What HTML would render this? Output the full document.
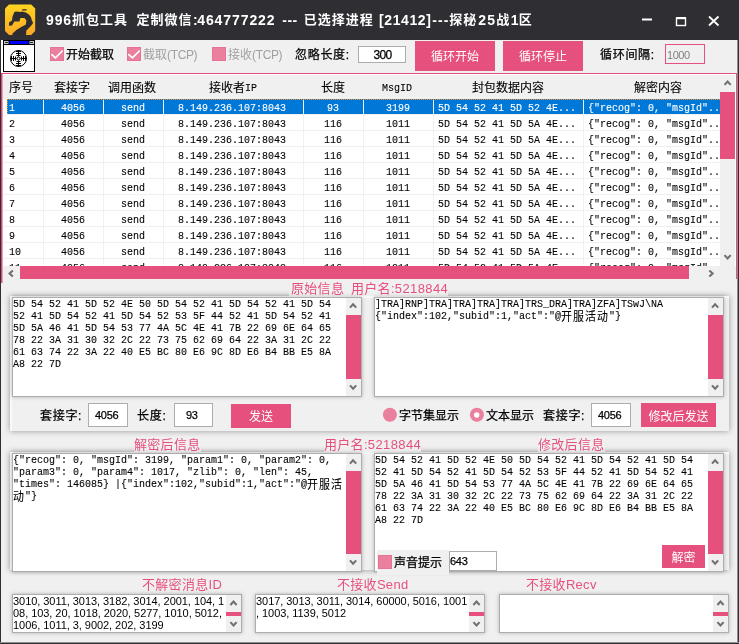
<!DOCTYPE html><html><head><meta charset="utf-8"><title>996抓包工具</title><style>
html,body{margin:0;padding:0;}
body{width:739px;height:644px;position:relative;overflow:hidden;will-change:transform;background:#f0f0f0;font-family:"Liberation Sans","Noto Sans CJK SC",sans-serif;font-size:12px;color:#000;}
.a{position:absolute;white-space:pre;}
.ui{font-family:"Liberation Sans","Noto Sans CJK SC",sans-serif;font-size:12px;line-height:16px;}
.m{font-family:"Liberation Mono","Noto Sans CJK SC",monospace;font-size:11px;line-height:12px;transform:scaleX(0.9091);transform-origin:0 0;-webkit-text-stroke:0.1px;}
.pk{color:#e6507d;font-size:13px;line-height:16px;background:#f0f0f0;letter-spacing:0.3px;margin-left:-1px;}
.ui{margin-top:1px;-webkit-text-stroke:0.25px;}
.btn{background:#e6507d;color:#fff;text-align:center;margin-top:0;-webkit-text-stroke:0;padding-top:1px;box-sizing:border-box;}
.lb{letter-spacing:0.7px;}
.gr{color:#a0a0a0;-webkit-text-stroke:0;}
.tcp{letter-spacing:-0.35px;}
.n{font-size:11px;letter-spacing:-0.25px;}
.ta{background:#fff;border:1px solid #adadad;box-sizing:border-box;box-shadow:0 0 4px rgba(0,0,0,0.25);}
.grp{background:#f0f0f0;box-sizing:border-box;border-left:2px solid #f9f9f9;border-top:2px solid #f9f9f9;box-shadow:0 0 6px rgba(0,0,0,0.38);}
.cj{font-size:12px;letter-spacing:1.2px;line-height:12px;display:inline-block;height:12px;vertical-align:top;position:relative;top:1.5px;}
.dg{letter-spacing:0.4px;}
.inp{background:#fff;border:1px solid #adadad;box-sizing:border-box;}
.sb{background:#f0f0f0;}
.th{background:#e6507d;}
.row{position:absolute;left:3px;width:717px;height:15px;border-bottom:1px solid #f0f0f0;}
.row .m{top:3px;}
.vl{position:absolute;width:1px;background:#f0f0f0;top:99px;height:166px;}
.sel{background:#0078d7;color:#fff;}
.hd{top:79px;-webkit-text-stroke:0.1px;}
.m12{font-size:12px;transform:scaleX(0.8333);}
.tc{font-size:13px;letter-spacing:1px;vertical-align:top;}
.tl{font-size:14px;vertical-align:top;}
</style></head><body>
<div class="a" style="left:0;top:0;width:739px;height:40px;background:#2f2e33"></div>
<svg class="a" style="left:0;top:0" width="40" height="40" viewBox="0 0 40 40">
<defs><linearGradient id="g" x1="0" y1="0" x2="0" y2="1"><stop offset="0" stop-color="#ffd420"/><stop offset="1" stop-color="#f8a926"/></linearGradient></defs>
<path d="M9 4.6 L31.2 4.6 L35.2 8.6 L35.2 31 L31.2 35 L9 35 L5 31 L5 8.6 Z" fill="url(#g)"/>
<path d="M9 25.8 L9 22.4 L12 20.4 L12.5 16.4 L14.4 12 L16 11.5 L20.4 12 L21.9 11.5 L25.9 12.5 L28.9 14.4 L30.9 17 L31.9 20.4 L33.1 22.9 L30.9 25.9 L28.9 27.9 L26.4 30.4 L25.9 35.8 L12.5 35.8 L12.5 33.4 L16.4 29.9 L20.4 27.4 L25.9 24.4 L26.4 20.4 L24.4 17.9 L20.4 17.9 L19.4 21.4 L14.4 21.4 L12 25.4 Z" fill="#2d2d32"/>
<rect x="22.2" y="9.2" width="4.4" height="1.3" fill="#2d2d32"/>
</svg>
<div class="a" id="ttl" style="left:46px;top:9px;height:22px;line-height:22px;color:#fff;font-weight:bold;white-space:pre"><span class="tl" style="display:inline-block;width:26px;letter-spacing:0.9px;">996</span><span class="tc" style="display:inline-block;width:64.4px;">抓包工具</span><span class="tc" style="display:inline-block;width:56.6px;">定制微信</span><span class="tl" style="display:inline-block;width:4.2px;">:</span><span class="tl" style="display:inline-block;width:85.1px;letter-spacing:0.92px;">464777222</span><span class="tl" style="display:inline-block;width:21.6px;letter-spacing:0.5px;">---</span><span class="tc" style="display:inline-block;width:75.2px;">已选择进程</span><span class="tl" style="display:inline-block;width:53.3px;letter-spacing:0.6px;">[21412]</span><span class="tl" style="display:inline-block;width:17px;letter-spacing:1px;">---</span><span class="tc" style="display:inline-block;width:29px;">探秘</span><span class="tl" style="display:inline-block;width:18px;letter-spacing:1.2px;">25</span><span class="tc" style="display:inline-block;width:14.5px;">战</span><span class="tl" style="display:inline-block;width:8px;">1</span><span class="tc" style="display:inline-block;width:15px;">区</span></div>
<svg class="a" style="left:630px;top:8px" width="100" height="26" viewBox="630 8 100 26">
<g stroke="#fff" fill="none">
<line x1="642" y1="19.5" x2="652" y2="19.5" stroke-width="2"/>
<rect x="676.5" y="18.5" width="9" height="7" stroke-width="1.4"/><line x1="676" y1="18" x2="686" y2="18" stroke-width="2"/>
<path d="M709 16.5 L718.5 25.5 M718.5 16.5 L709 25.5" stroke-width="1.8"/>
</g></svg>
<svg class="a" style="left:1px;top:40px" width="35" height="33" viewBox="-2 0 35 33">
<rect x="-2" y="0" width="2" height="33" fill="#fff"/>
<rect x="0.5" y="0.5" width="31" height="31" fill="#fff" stroke="#000"/>
<rect x="1" y="1" width="30" height="3" fill="#0000ff"/>
<rect x="1" y="4" width="30" height="1" fill="#000"/>
<rect x="1" y="1" width="5" height="3" fill="#c8c8c8"/><rect x="2" y="2" width="3" height="1" fill="#222"/><rect x="5.5" y="1" width="1" height="3" fill="#000"/>
<rect x="26" y="1" width="5" height="3" fill="#c8c8c8"/><rect x="27" y="2" width="3" height="1" fill="#222"/><rect x="25.5" y="1" width="1" height="3" fill="#000"/>
<g stroke="#000" fill="none" stroke-width="1">
<circle cx="15.5" cy="18.5" r="8"/>
<circle cx="15.5" cy="18.5" r="1.5" fill="#fff"/>
<path d="M15.5 10 V16.5 M15.5 20.5 V27 M7 18.5 H13.5 M17.5 18.5 H24"/>
<path d="M13 11.5 H18 M13 13.5 H18 M13.5 15.5 H17.5 M13 25.5 H18 M13 23.5 H18 M13.5 21.5 H17.5"/>
<path d="M8.5 16 V21 M10.5 16 V21 M12.5 16.5 V20.5 M22.5 16 V21 M20.5 16 V21 M18.5 16.5 V20.5"/>
</g></svg>
<svg class="a" style="left:50px;top:47px" width="14" height="14" viewBox="0 0 14 14"><rect width="14" height="14" fill="#e77394"/><rect x="1" y="1" width="12" height="12" fill="#ea7f9e"/><polyline points="1.8,7.6 5.4,10.9 12.3,4" fill="none" stroke="#fff" stroke-width="1.7" stroke-linecap="round" stroke-linejoin="round"/></svg>
<div class="a ui" style="left:66px;top:46px">开始截取</div>
<svg class="a" style="left:127px;top:47px" width="14" height="14" viewBox="0 0 14 14"><rect width="14" height="14" fill="#e77394"/><rect x="1" y="1" width="12" height="12" fill="#ea7f9e"/><polyline points="1.8,7.6 5.4,10.9 12.3,4" fill="none" stroke="#fff" stroke-width="1.7" stroke-linecap="round" stroke-linejoin="round"/></svg>
<div class="a ui gr" style="left:143px;top:46px">截取<span class="tcp">(TCP)</span></div>
<svg class="a" style="left:212px;top:47px" width="14" height="14" viewBox="0 0 14 14"><rect width="14" height="14" fill="#e77394"/><rect x="1" y="1" width="12" height="12" fill="#ea7f9e"/></svg>
<div class="a ui gr" style="left:228px;top:46px">接收<span class="tcp">(TCP)</span></div>
<div class="a ui lb" style="left:295px;top:46px">忽略长度:</div>
<div class="a inp" style="left:358px;top:46px;width:48px;height:17px"></div><div class="a ui" style="left:373.5px;top:46px;letter-spacing:-0.7px">300</div>
<div class="a btn ui" style="left:415px;top:41px;width:80px;height:30px;line-height:30px">循环开始</div>
<div class="a btn ui" style="left:503px;top:41px;width:80px;height:30px;line-height:30px">循环停止</div>
<div class="a ui lb" style="left:600px;top:46px">循环间隔:</div>
<div class="a" style="left:665px;top:44px;width:40px;height:20px;box-sizing:border-box;border:1px solid #e6507d;background:#f0f0f0"></div><div class="a ui" style="left:667px;top:46px;color:#808080;font-size:11px;letter-spacing:-0.45px;-webkit-text-stroke:0">1000</div>
<div class="a" style="left:1px;top:73px;width:736px;height:1px;background:#e6507d"></div>
<div class="a" style="left:1px;top:73px;width:1px;height:210px;background:#d04b74"></div>
<div class="a" style="left:2px;top:74px;width:1px;height:209px;background:#efa0b8"></div>
<div class="a" style="left:736px;top:73px;width:1px;height:206px;background:#e6507d"></div>
<div class="a" style="left:3px;top:74px;width:733px;height:1px;background:#fff"></div>
<div class="a" style="left:735px;top:74px;width:1px;height:205px;background:#fff"></div>
<div class="a" style="left:3px;top:99px;width:717px;height:167px;background:#fff"></div>
<div class="a ui hd" style="left:9px">序号</div>
<div class="a ui hd" style="left:54px">套接字</div>
<div class="a ui hd" style="left:108px">调用函数</div>
<div class="a ui hd" style="left:209px">接收者</div>
<div class="a ui hd" style="left:321px">长度</div>
<div class="a ui hd" style="left:472px">封包数据内容</div>
<div class="a ui hd" style="left:634px">解密内容</div>
<div class="a m" style="left:245px;top:82px">IP</div>
<div class="a m" style="left:382px;top:82px">MsgID</div>
<div class="row sel" style="top:99px;left:7px;width:713px;"><span class="a m" style="left:2px">1</span><span class="a m" style="left:54px">4056</span><span class="a m" style="left:114px">send</span><span class="a m" style="left:171px">8.149.236.107:8043</span><span class="a m" style="left:320px">93</span><span class="a m" style="left:379px">3199</span><span class="a m" style="left:431px">5D 54 52 41 5D 52 4E...</span><span class="a m" style="left:581px">{&quot;recog&quot;: 0, &quot;msgId&quot;..</span></div>
<div class="row" style="top:115px;"><span class="a m" style="left:6px">2</span><span class="a m" style="left:58px">4056</span><span class="a m" style="left:118px">send</span><span class="a m" style="left:175px">8.149.236.107:8043</span><span class="a m" style="left:321px">116</span><span class="a m" style="left:383px">1011</span><span class="a m" style="left:435px">5D 54 52 41 5D 5A 4E...</span><span class="a m" style="left:585px">{&quot;recog&quot;: 0, &quot;msgId&quot;..</span></div>
<div class="row" style="top:131px;"><span class="a m" style="left:6px">3</span><span class="a m" style="left:58px">4056</span><span class="a m" style="left:118px">send</span><span class="a m" style="left:175px">8.149.236.107:8043</span><span class="a m" style="left:321px">116</span><span class="a m" style="left:383px">1011</span><span class="a m" style="left:435px">5D 54 52 41 5D 5A 4E...</span><span class="a m" style="left:585px">{&quot;recog&quot;: 0, &quot;msgId&quot;..</span></div>
<div class="row" style="top:147px;"><span class="a m" style="left:6px">4</span><span class="a m" style="left:58px">4056</span><span class="a m" style="left:118px">send</span><span class="a m" style="left:175px">8.149.236.107:8043</span><span class="a m" style="left:321px">116</span><span class="a m" style="left:383px">1011</span><span class="a m" style="left:435px">5D 54 52 41 5D 5A 4E...</span><span class="a m" style="left:585px">{&quot;recog&quot;: 0, &quot;msgId&quot;..</span></div>
<div class="row" style="top:163px;"><span class="a m" style="left:6px">5</span><span class="a m" style="left:58px">4056</span><span class="a m" style="left:118px">send</span><span class="a m" style="left:175px">8.149.236.107:8043</span><span class="a m" style="left:321px">116</span><span class="a m" style="left:383px">1011</span><span class="a m" style="left:435px">5D 54 52 41 5D 5A 4E...</span><span class="a m" style="left:585px">{&quot;recog&quot;: 0, &quot;msgId&quot;..</span></div>
<div class="row" style="top:179px;"><span class="a m" style="left:6px">6</span><span class="a m" style="left:58px">4056</span><span class="a m" style="left:118px">send</span><span class="a m" style="left:175px">8.149.236.107:8043</span><span class="a m" style="left:321px">116</span><span class="a m" style="left:383px">1011</span><span class="a m" style="left:435px">5D 54 52 41 5D 5A 4E...</span><span class="a m" style="left:585px">{&quot;recog&quot;: 0, &quot;msgId&quot;..</span></div>
<div class="row" style="top:195px;"><span class="a m" style="left:6px">7</span><span class="a m" style="left:58px">4056</span><span class="a m" style="left:118px">send</span><span class="a m" style="left:175px">8.149.236.107:8043</span><span class="a m" style="left:321px">116</span><span class="a m" style="left:383px">1011</span><span class="a m" style="left:435px">5D 54 52 41 5D 5A 4E...</span><span class="a m" style="left:585px">{&quot;recog&quot;: 0, &quot;msgId&quot;..</span></div>
<div class="row" style="top:211px;"><span class="a m" style="left:6px">8</span><span class="a m" style="left:58px">4056</span><span class="a m" style="left:118px">send</span><span class="a m" style="left:175px">8.149.236.107:8043</span><span class="a m" style="left:321px">116</span><span class="a m" style="left:383px">1011</span><span class="a m" style="left:435px">5D 54 52 41 5D 5A 4E...</span><span class="a m" style="left:585px">{&quot;recog&quot;: 0, &quot;msgId&quot;..</span></div>
<div class="row" style="top:227px;"><span class="a m" style="left:6px">9</span><span class="a m" style="left:58px">4056</span><span class="a m" style="left:118px">send</span><span class="a m" style="left:175px">8.149.236.107:8043</span><span class="a m" style="left:321px">116</span><span class="a m" style="left:383px">1011</span><span class="a m" style="left:435px">5D 54 52 41 5D 5A 4E...</span><span class="a m" style="left:585px">{&quot;recog&quot;: 0, &quot;msgId&quot;..</span></div>
<div class="row" style="top:243px;"><span class="a m" style="left:6px">10</span><span class="a m" style="left:58px">4056</span><span class="a m" style="left:118px">send</span><span class="a m" style="left:175px">8.149.236.107:8043</span><span class="a m" style="left:321px">116</span><span class="a m" style="left:383px">1011</span><span class="a m" style="left:435px">5D 54 52 41 5D 5A 4E...</span><span class="a m" style="left:585px">{&quot;recog&quot;: 0, &quot;msgId&quot;..</span></div>
<div class="row" style="top:259px;height:7px;border-bottom:none;overflow:hidden;"><span class="a m" style="left:6px">11</span><span class="a m" style="left:58px">4056</span><span class="a m" style="left:118px">send</span><span class="a m" style="left:175px">8.149.236.107:8043</span><span class="a m" style="left:321px">116</span><span class="a m" style="left:383px">1011</span><span class="a m" style="left:435px">5D 54 52 41 5D 5A 4E...</span><span class="a m" style="left:585px">{&quot;recog&quot;: 0, &quot;msgId&quot;..</span></div>
<div class="vl" style="left:43px"></div>
<div class="vl" style="left:103px"></div>
<div class="vl" style="left:163px"></div>
<div class="vl" style="left:303px"></div>
<div class="vl" style="left:363px"></div>
<div class="vl" style="left:433px"></div>
<div class="vl" style="left:583px"></div>
<div class="a" style="left:7px;top:99px;width:713px;height:0;border-top:1px dotted #ff9020"></div>
<div class="a" style="left:7px;top:99px;width:0;height:15px;border-left:1px dotted #ff9020"></div>
<div class="a th" style="left:720px;top:92px;width:15px;height:67px"></div>
<svg class="a" style="left:720px;top:75px" width="16" height="190" viewBox="0 0 16 190"><polyline points="4.5,9.85 7.6,6.549999999999999 10.7,9.85" fill="none" stroke="#707070" stroke-width="2.1"/><polyline points="4.5,180.15 7.6,183.45000000000002 10.7,180.15" fill="none" stroke="#707070" stroke-width="2.1"/></svg>
<div class="a sb" style="left:3px;top:266px;width:733px;height:17px"></div>
<div class="a th" style="left:20px;top:266px;width:669px;height:13px"></div>
<svg class="a" style="left:3px;top:265px" width="717" height="17" viewBox="0 0 717 17"><polyline points="9.85,5.4 6.549999999999999,8.5 9.85,11.6" fill="none" stroke="#707070" stroke-width="2.1"/><polyline points="706.35,5.4 709.65,8.5 706.35,11.6" fill="none" stroke="#707070" stroke-width="2.1"/></svg>
<div class="a grp" style="left:10px;top:296px;width:719px;height:135px"></div>
<div class="a pk" style="left:290px;top:281px;width:159px;height:15px"></div>
<div class="a pk" style="left:292px;top:281px;background:none">原始信息</div>
<div class="a pk" style="left:352px;top:281px;background:none">用户名:<span class="dg">5218844</span></div>
<div class="a ta" style="left:12px;top:297px;width:350px;height:100px"></div>
<div class="a m" style="left:13px;top:298px">5D 54 52 41 5D 52 4E 50 5D 54 52 41 5D 54 52 41 5D 54
52 41 5D 54 52 41 5D 54 52 53 5F 44 52 41 5D 54 52 41
5D 5A 46 41 5D 54 53 77 4A 5C 4E 41 7B 22 69 6E 64 65
78 22 3A 31 30 32 2C 22 73 75 62 69 64 22 3A 31 2C 22
61 63 74 22 3A 22 40 E5 BC 80 E6 9C 8D E6 B4 BB E5 8A
A8 22 7D</div>
<div class="a sb" style="left:346px;top:298px;width:15px;height:98px"></div><div class="a th" style="left:346px;top:315px;width:15px;height:64px"></div><svg class="a" style="left:346px;top:298px" width="15" height="98" viewBox="0 0 15 98"><polyline points="3.9999999999999996,9.65 7.1,6.35 10.2,9.65" fill="none" stroke="#707070" stroke-width="2.1"/><polyline points="3.9999999999999996,87.35 7.1,90.65 10.2,87.35" fill="none" stroke="#707070" stroke-width="2.1"/></svg>
<div class="a ta" style="left:374px;top:297px;width:350px;height:100px"></div>
<div class="a m" style="left:375px;top:298px">]TRA]RNP]TRA]TRA]TRA]TRA]TRS_DRA]TRA]ZFA]TSwJ\NA
{&quot;index&quot;:102,&quot;subid&quot;:1,&quot;act&quot;:&quot;@<span class="cj">开服活动</span>&quot;}</div>
<div class="a sb" style="left:708px;top:298px;width:15px;height:98px"></div><div class="a th" style="left:708px;top:315px;width:15px;height:64px"></div><svg class="a" style="left:708px;top:298px" width="15" height="98" viewBox="0 0 15 98"><polyline points="3.9999999999999996,9.65 7.1,6.35 10.2,9.65" fill="none" stroke="#707070" stroke-width="2.1"/><polyline points="3.9999999999999996,87.35 7.1,90.65 10.2,87.35" fill="none" stroke="#707070" stroke-width="2.1"/></svg>
<div class="a ui lb" style="left:40px;top:407px">套接字:</div>
<div class="a inp" style="left:88px;top:403px;width:40px;height:24px"></div><div class="a ui n" style="left:95px;top:406px">4056</div>
<div class="a ui lb" style="left:137px;top:407px">长度:</div>
<div class="a inp" style="left:174px;top:403px;width:39px;height:24px"></div><div class="a ui n" style="left:186px;top:406px">93</div>
<div class="a btn ui" style="left:231px;top:404px;width:60px;height:24px;line-height:24px">发送</div>
<svg class="a" style="left:382px;top:407px" width="104" height="16" viewBox="0 0 104 16"><circle cx="7.9" cy="7.8" r="7" fill="#ea7f9e"/><circle cx="94.9" cy="7.8" r="7" fill="#ea7f9e"/><circle cx="94.7" cy="8" r="2.7" fill="#fff"/></svg>
<div class="a ui" style="left:399px;top:407px">字节集显示</div>
<div class="a ui" style="left:486px;top:407px">文本显示</div>
<div class="a ui lb" style="left:543px;top:407px">套接字:</div>
<div class="a inp" style="left:591px;top:403px;width:40px;height:24px"></div><div class="a ui n" style="left:598px;top:406px">4056</div>
<div class="a btn ui" style="left:641px;top:403px;width:75px;height:24px;line-height:24px;padding-top:1.5px">修改后发送</div>
<div class="a grp" style="left:10px;top:452px;width:719px;height:118px"></div>
<div class="a pk" style="left:135px;top:437px">解密后信息</div>
<div class="a pk" style="left:325px;top:437px">用户名:<span class="dg">5218844</span></div>
<div class="a pk" style="left:539px;top:437px">修改后信息</div>
<div class="a ta" style="left:12px;top:453px;width:350px;height:119px"></div>
<div class="a m" style="left:13px;top:454px">{&quot;recog&quot;: 0, &quot;msgId&quot;: 3199, &quot;param1&quot;: 0, &quot;param2&quot;: 0,
&quot;param3&quot;: 0, &quot;param4&quot;: 1017, &quot;zlib&quot;: 0, &quot;len&quot;: 45,
&quot;times&quot;: 146085} |{&quot;index&quot;:102,&quot;subid&quot;:1,&quot;act&quot;:&quot;@<span class="cj">开服活</span>
<span class="cj">动</span>&quot;}</div>
<div class="a sb" style="left:346px;top:454px;width:15px;height:117px"></div><div class="a th" style="left:346px;top:471px;width:15px;height:83px"></div><svg class="a" style="left:346px;top:454px" width="15" height="117" viewBox="0 0 15 117"><polyline points="3.9999999999999996,9.65 7.1,6.35 10.2,9.65" fill="none" stroke="#707070" stroke-width="2.1"/><polyline points="3.9999999999999996,106.35 7.1,109.65 10.2,106.35" fill="none" stroke="#707070" stroke-width="2.1"/></svg>
<div class="a ta" style="left:374px;top:453px;width:350px;height:119px"></div>
<div class="a m" style="left:375px;top:454px">5D 54 52 41 5D 52 4E 50 5D 54 52 41 5D 54 52 41 5D 54
52 41 5D 54 52 41 5D 54 52 53 5F 44 52 41 5D 54 52 41
5D 5A 46 41 5D 54 53 77 4A 5C 4E 41 7B 22 69 6E 64 65
78 22 3A 31 30 32 2C 22 73 75 62 69 64 22 3A 31 2C 22
61 63 74 22 3A 22 40 E5 BC 80 E6 9C 8D E6 B4 BB E5 8A
A8 22 7D</div>
<div class="a sb" style="left:708px;top:454px;width:15px;height:117px"></div><div class="a th" style="left:708px;top:471px;width:15px;height:83px"></div><svg class="a" style="left:708px;top:454px" width="15" height="117" viewBox="0 0 15 117"><polyline points="3.9999999999999996,9.65 7.1,6.35 10.2,9.65" fill="none" stroke="#707070" stroke-width="2.1"/><polyline points="3.9999999999999996,106.35 7.1,109.65 10.2,106.35" fill="none" stroke="#707070" stroke-width="2.1"/></svg>
<div class="a" style="left:377px;top:550px;width:72px;height:25px;background:#f0f0f0"></div>
<svg class="a" style="left:378px;top:555px" width="14" height="14" viewBox="0 0 14 14"><rect width="14" height="14" fill="#e77394"/><rect x="1" y="1" width="12" height="12" fill="#ea7f9e"/></svg>
<div class="a ui" style="left:394px;top:554px">声音提示</div>
<div class="a inp" style="left:449px;top:551px;width:48px;height:20px"></div><div class="a ui n" style="left:450px;top:552px">643</div>
<div class="a btn ui" style="left:662px;top:545px;width:43px;height:23px;line-height:23px;padding-top:2px">解密</div>
<div class="a pk" style="left:143px;top:577px">不解密消息ID</div>
<div class="a pk" style="left:338px;top:577px">不接收Send</div>
<div class="a pk" style="left:527px;top:577px">不接收Recv</div>
<div class="a ta" style="left:12px;top:594px;width:230px;height:39px;"></div><div class="a" style="left:13px;top:595px;font-size:11px;line-height:12px;letter-spacing:-0.05px">3010, 3011, 3013, 3182, 3014, 2001, 104, 1
08, 103, 20, 1018, 2020, 5277, 1010, 5012,
1006, 1011, 3, 9002, 202, 3199</div><div class="a sb" style="left:226px;top:595px;width:15px;height:37px"></div><div class="a th" style="left:226px;top:612px;width:15px;height:4px"></div><svg class="a" style="left:226px;top:595px" width="15" height="37" viewBox="0 0 15 37"><polyline points="4.4,9.950000000000001 7.5,6.65 10.6,9.950000000000001" fill="none" stroke="#707070" stroke-width="2.1"/><polyline points="4.4,27.150000000000002 7.5,30.45 10.6,27.150000000000002" fill="none" stroke="#707070" stroke-width="2.1"/></svg>
<div class="a ta" style="left:255px;top:594px;width:230px;height:39px;"></div><div class="a" style="left:256px;top:595px;font-size:11px;line-height:12px;letter-spacing:-0.05px">3017, 3013, 3011, 3014, 60000, 5016, 1001
, 1003, 1139, 5012</div><div class="a sb" style="left:469px;top:595px;width:15px;height:37px"></div><div class="a th" style="left:469px;top:612px;width:15px;height:4px"></div><svg class="a" style="left:469px;top:595px" width="15" height="37" viewBox="0 0 15 37"><polyline points="4.4,9.950000000000001 7.5,6.65 10.6,9.950000000000001" fill="none" stroke="#707070" stroke-width="2.1"/><polyline points="4.4,27.150000000000002 7.5,30.45 10.6,27.150000000000002" fill="none" stroke="#707070" stroke-width="2.1"/></svg>
<div class="a ta" style="left:499px;top:594px;width:230px;height:39px;"></div><div class="a" style="left:500px;top:595px;font-size:11px;line-height:12px;letter-spacing:-0.05px"></div><div class="a sb" style="left:713px;top:595px;width:15px;height:37px"></div><div class="a th" style="left:713px;top:612px;width:15px;height:4px"></div><svg class="a" style="left:713px;top:595px" width="15" height="37" viewBox="0 0 15 37"><polyline points="4.4,9.950000000000001 7.5,6.65 10.6,9.950000000000001" fill="none" stroke="#707070" stroke-width="2.1"/><polyline points="4.4,27.150000000000002 7.5,30.45 10.6,27.150000000000002" fill="none" stroke="#707070" stroke-width="2.1"/></svg>
<div class="a" style="left:0;top:40px;width:1px;height:604px;background:#2f2e33"></div>
<div class="a" style="left:737px;top:40px;width:1px;height:604px;background:#909093"></div>
<div class="a" style="left:738px;top:40px;width:1px;height:604px;background:#2f2e33"></div>
<div class="a" style="left:0;top:642px;width:739px;height:1px;background:#909093"></div>
<div class="a" style="left:0;top:643px;width:739px;height:1px;background:#2f2e33"></div>
</body></html>
